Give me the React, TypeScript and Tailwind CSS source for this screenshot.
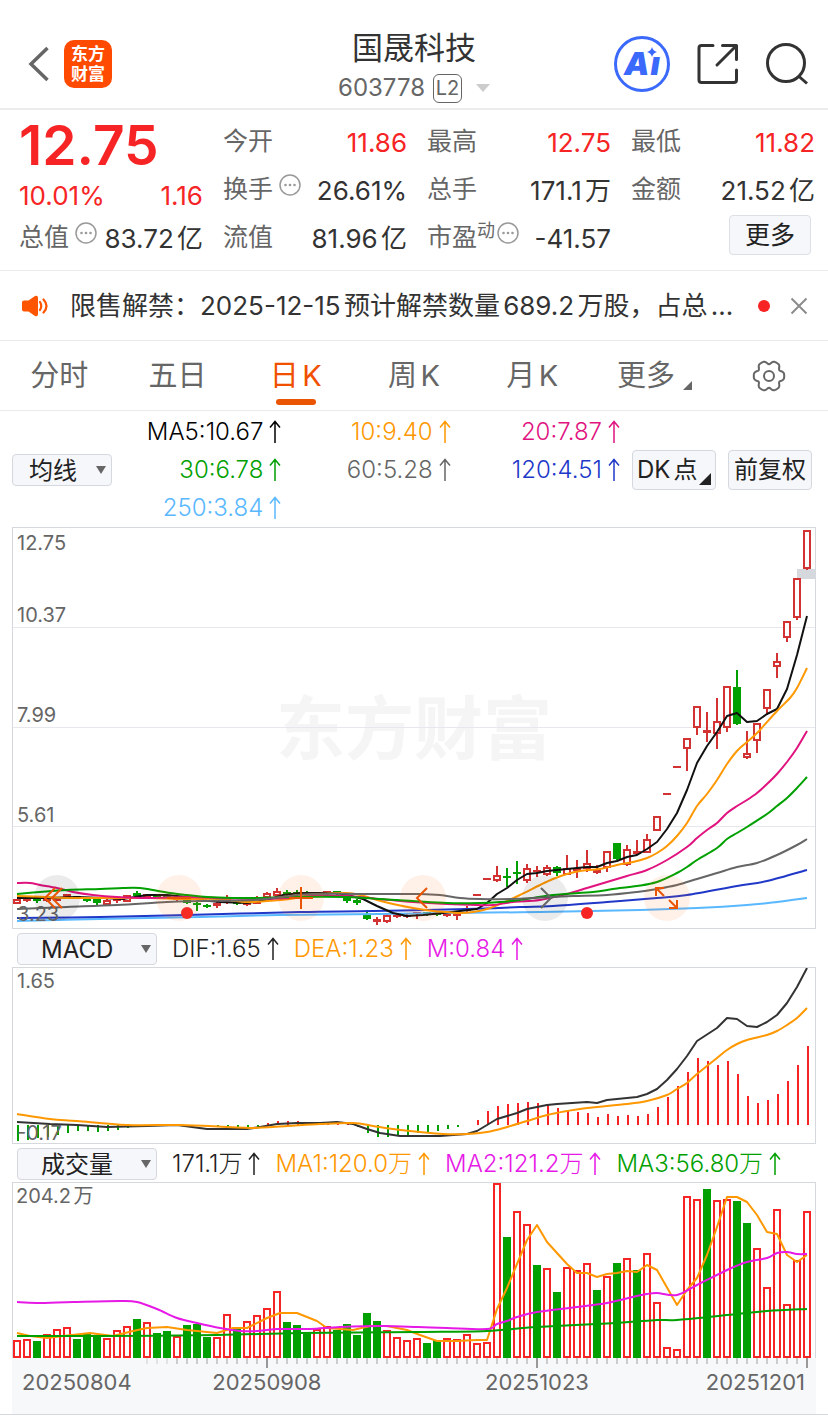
import { useState, type ReactNode } from "react";
import clsx from "clsx";

type Point = [number, number];

// one slot per trading day
const slotX = (i: number) => 17 + i * 10;

// [body top, body bottom, high, low, is down]
const CANDLES: [number, number, number, number, number?][] = [
  [899, 903, 899, 903], [899, 901, 899, 901], [899, 900, 898, 902, 1], [899, 900, 898, 901], [899, 900, 899, 900],
  [894, 897, 894, 897], [896, 897, 896, 898, 1], [899, 900, 898, 901, 1], [899, 903, 898, 904, 1], [900, 904, 899, 904],
  [899, 901, 899, 902], [895, 901, 895, 901], [893, 896, 891, 897, 1], [894, 897, 894, 898], [895, 897, 895, 898, 1],
  [896, 898, 896, 898, 1], [898, 899, 897, 900], [899, 903, 898, 903, 1], [903, 905, 901, 910, 1], [905, 906, 904, 907, 1],
  [903, 906, 902, 907], [899, 902, 895, 903], [902, 904, 901, 904, 1], [902, 905, 902, 905], [897, 903, 896, 903],
  [893, 897, 892, 898], [891, 895, 888, 896], [892, 894, 890, 896, 1], [892, 894, 890, 895, 1], [893, 895, 891, 896, 1],
  [893, 894, 892, 895], [891, 893, 891, 894], [891, 893, 891, 894, 1], [898, 901, 896, 902, 1], [900, 903, 899, 904, 1],
  [915, 919, 910, 919, 1], [919, 922, 917, 924], [915, 921, 914, 922], [915, 917, 914, 917], [915, 916, 914, 917],
  [912, 914, 912, 918], [912, 914, 912, 915, 1], [913, 915, 913, 915, 1], [914, 916, 914, 916], [914, 916, 914, 919],
  [908, 911, 906, 911], [894, 895, 894, 895], [878, 879, 878, 879], [875, 880, 866, 881], [876, 878, 868, 886, 1],
  [872, 874, 861, 883, 1], [868, 880, 864, 882], [870, 872, 866, 876], [867, 874, 865, 875], [867, 873, 866, 875, 1],
  [868, 874, 855, 874], [868, 871, 860, 877], [863, 868, 850, 871], [870, 873, 865, 873], [851, 867, 851, 871],
  [843, 859, 843, 859, 1], [849, 864, 845, 865], [851, 854, 840, 854], [839, 852, 834, 852], [816, 830, 816, 830],
  [793, 794, 793, 794], [766, 767, 766, 767], [738, 748, 738, 770], [706, 727, 706, 734], [730, 733, 712, 741],
  [721, 733, 698, 748], [686, 727, 686, 731], [687, 724, 670, 724, 1], [753, 757, 731, 758], [723, 740, 723, 752],
  [689, 708, 689, 714], [661, 666, 653, 677], [621, 637, 621, 641], [578, 617, 578, 619], [530, 568, 530, 569],
];

// negative = down day
const VOLUMES = [
  18, 19, -17, 24, 29, 31, -19, -25, -23, 20, 28, 32, -39, 36, -25, -27, 22, -33, -34, -21,
  21, 44, -31, 37, 43, 50, 67, -36, -33, -26, 29, 32, -28, -34, -23, -45, -37, 28, 21, 18,
  20, -15, -18, 20, 19, 24, 15, 16, 175, -121, 147, 134, -93, 90, -66, 91, 88, 95, -68, 82,
  -95, 100, -88, 105, 56, 11, 9, 162, 159, -169, 158, 159, -157, -135, 110, 71, 149, 54, 98, 147,
];

const MACD_BARS = [
  -16, -15, -13, -12, -10, -8, -6, -6, -7, -6, -5, -3, -1, 0, 0, 0, 0, 0, 0, -1,
  -2, -2, -2, -2, -2, 2, 4, 4, 4, 3, 2, 2, 1, 2, -2, -8, -12, -12, -11, -11,
  -8, -7, -6, -4, -2, 0, 5, 14, 19, 21, 22, 23, 22, 21, 17, 15, 13, 12, 8, 11,
  9, 10, 9, 11, 18, 28, 39, 53, 67, 64, 60, 64, 51, 29, 22, 25, 31, 44, 60, 79,
];

const MA5: Point[] = [
  [17, 898], [47, 898], [77, 897], [103, 898], [123, 899], [147, 895], [167, 895], [187, 897], [200, 900], [220, 902],
  [247, 903], [267, 900], [283, 895], [300, 893], [320, 893], [337, 893], [347, 895], [363, 899], [377, 906], [393, 913],
  [407, 916], [423, 915], [443, 913], [460, 911], [477, 909], [487, 903], [497, 894], [507, 888], [517, 880], [527, 874],
  [537, 873], [547, 871], [567, 869], [577, 868], [587, 867], [597, 867], [607, 863], [617, 861], [627, 857], [637, 855],
  [647, 849], [657, 842], [667, 829], [677, 813], [687, 790], [697, 763], [707, 746], [717, 732], [727, 716], [737, 713],
  [747, 722], [757, 721], [767, 714], [777, 709], [787, 689], [797, 655], [807, 616],
];
const MA10: Point[] = [
  [17, 896], [47, 897], [67, 898], [117, 898], [150, 898], [183, 899], [217, 899], [247, 902], [267, 901], [290, 899],
  [300, 897], [320, 894], [347, 893], [360, 895], [377, 900], [393, 904], [413, 908], [433, 911], [447, 912], [460, 913],
  [473, 912], [487, 909], [500, 904], [520, 895], [540, 885], [553, 879], [567, 874], [580, 871], [600, 869], [617, 865],
  [633, 862], [647, 858], [657, 853], [667, 846], [677, 836], [687, 823], [697, 806], [707, 794], [717, 780], [727, 764],
  [737, 751], [747, 742], [757, 733], [777, 711], [790, 698], [797, 688], [807, 668],
];
const MA20: Point[] = [
  [17, 883], [30, 883], [40, 885], [57, 888], [73, 892], [93, 895], [117, 897], [147, 898], [187, 897], [217, 898],
  [253, 899], [290, 898], [313, 896], [347, 896], [380, 899], [413, 902], [447, 904], [477, 905], [493, 905], [513, 902],
  [540, 900], [567, 894], [587, 888], [607, 882], [627, 876], [647, 870], [667, 860], [687, 847], [697, 838], [707, 830],
  [717, 823], [727, 813], [737, 806], [747, 800], [757, 793], [767, 784], [777, 774], [787, 762], [797, 748], [807, 731],
];
const MA30: Point[] = [
  [17, 894], [40, 892], [67, 890], [100, 889], [123, 888], [140, 888], [153, 890], [170, 893], [187, 895], [207, 897],
  [233, 898], [253, 898], [290, 897], [347, 897], [380, 899], [413, 901], [447, 903], [480, 903], [500, 902], [520, 900],
  [553, 895], [593, 892], [613, 889], [637, 886], [657, 882], [677, 873], [687, 867], [697, 860], [717, 848], [727, 839],
  [737, 833], [747, 827], [767, 814], [777, 806], [787, 798], [797, 788], [807, 777],
];
const MA60: Point[] = [
  [17, 909], [67, 907], [117, 905], [167, 902], [200, 901], [253, 900], [290, 896], [313, 894], [380, 894], [420, 894],
  [440, 895], [460, 898], [480, 899], [513, 899], [553, 897], [573, 896], [607, 895], [637, 892], [657, 889], [677, 885],
  [697, 879], [717, 873], [737, 867], [757, 863], [777, 855], [797, 845], [807, 839],
];
const MA120: Point[] = [
  [17, 918], [100, 917], [187, 915], [300, 912], [373, 911], [467, 909], [520, 907], [553, 906], [607, 902], [657, 898],
  [687, 895], [737, 886], [767, 881], [807, 870],
];
const MA250: Point[] = [
  [17, 921], [100, 919], [200, 917], [280, 915], [380, 914], [447, 913], [540, 912], [640, 910], [697, 908], [747, 905],
  [777, 902], [807, 898],
];

const DIF: Point[] = [
  [17, 1122], [50, 1124], [77, 1125], [107, 1127], [147, 1126], [177, 1125], [207, 1129], [247, 1129], [260, 1127],
  [277, 1124], [297, 1123], [320, 1123], [337, 1122], [353, 1124], [367, 1129], [380, 1133], [400, 1136], [440, 1136],
  [467, 1134], [477, 1131], [487, 1125], [497, 1119], [517, 1113], [527, 1109], [547, 1105], [557, 1104], [587, 1102],
  [597, 1103], [607, 1100], [627, 1098], [637, 1097], [647, 1094], [657, 1089], [667, 1080], [677, 1069], [687, 1056],
  [697, 1041], [717, 1028], [727, 1018], [737, 1019], [747, 1026], [757, 1027], [767, 1022], [777, 1015], [787, 1003],
  [797, 987], [807, 968],
];
const DEA: Point[] = [
  [17, 1114], [50, 1119], [77, 1121], [127, 1125], [180, 1125], [227, 1127], [253, 1128], [287, 1126], [320, 1124],
  [353, 1123], [373, 1126], [393, 1129], [420, 1132], [443, 1134], [467, 1134], [487, 1132], [507, 1127], [527, 1121],
  [547, 1115], [567, 1111], [587, 1108], [627, 1104], [647, 1101], [667, 1095], [677, 1089], [687, 1083], [697, 1074],
  [717, 1058], [727, 1050], [737, 1044], [747, 1040], [767, 1035], [777, 1031], [787, 1025], [797, 1018], [807, 1008],
];

const VOL_MA1: Point[] = [
  [17, 1333], [30, 1336], [47, 1338], [63, 1336], [90, 1333], [113, 1336], [133, 1331], [147, 1328], [167, 1327],
  [187, 1330], [217, 1333], [233, 1328], [247, 1328], [267, 1318], [280, 1313], [297, 1313], [317, 1321], [327, 1328],
  [353, 1330], [370, 1326], [387, 1326], [407, 1330], [420, 1335], [437, 1341], [457, 1341], [477, 1340], [487, 1340],
  [497, 1309], [507, 1288], [527, 1240], [537, 1225], [547, 1242], [567, 1264], [577, 1273], [587, 1273], [597, 1277],
  [607, 1274], [617, 1273], [627, 1271], [637, 1272], [647, 1265], [657, 1270], [677, 1305], [687, 1290], [697, 1278],
  [707, 1255], [717, 1227], [727, 1197], [737, 1197], [747, 1202], [757, 1215], [767, 1232], [777, 1234], [787, 1255],
  [797, 1262], [807, 1255],
];
const VOL_MA2: Point[] = [
  [17, 1302], [37, 1303], [73, 1302], [120, 1301], [137, 1302], [157, 1309], [177, 1318], [197, 1323], [220, 1328],
  [240, 1331], [257, 1331], [277, 1329], [310, 1329], [340, 1327], [383, 1326], [418, 1327], [447, 1328], [487, 1329],
  [497, 1324], [507, 1321], [517, 1317], [537, 1312], [577, 1307], [607, 1303], [637, 1296], [647, 1294], [657, 1293],
  [677, 1295], [697, 1285], [727, 1270], [747, 1262], [767, 1258], [777, 1253], [787, 1252], [797, 1254], [807, 1254],
];
const VOL_MA3: Point[] = [
  [17, 1336], [100, 1336], [217, 1335], [300, 1333], [418, 1332], [487, 1331], [537, 1327], [617, 1323], [657, 1320],
  [677, 1320], [727, 1315], [767, 1311], [807, 1309],
];

const straight = (pts: Point[]) => pts.map(([x, y], i) => `${i ? "L" : "M"}${x} ${y}`).join("");

// Catmull-Rom through the points, written as cubic segments
function smooth(pts: Point[]) {
  let d = `M${pts[0][0]} ${pts[0][1]}`;
  for (let i = 0; i < pts.length - 1; i++) {
    const p0 = pts[i - 1] ?? pts[i];
    const p1 = pts[i];
    const p2 = pts[i + 1];
    const p3 = pts[i + 2] ?? p2;
    d += `C${p1[0] + (p2[0] - p0[0]) / 6} ${p1[1] + (p2[1] - p0[1]) / 6} ${p2[0] - (p3[0] - p1[0]) / 6} ${p2[1] - (p3[1] - p1[1]) / 6} ${p2[0]} ${p2[1]}`;
  }
  return d;
}

// six blunt teeth
const GEAR = Array.from({ length: 121 }, (_, i) => {
  const a = (i * 3 * Math.PI) / 180;
  const r = 14 + 1.7 * Math.cos(6 * a) - 0.5 * Math.cos(12 * a);
  return `${i ? "L" : "M"}${(17 + r * Math.cos(a)).toFixed(2)} ${(17 + r * Math.sin(a)).toFixed(2)}`;
}).join("");

function Line({ d, color }: { d: string; color: string }) {
  return <path d={d} fill="none" stroke={color} strokeWidth="2" strokeLinejoin="round" />;
}

function UpArrow() {
  return (
    <svg width="12" height="24" viewBox="0 0 12 24" fill="none" stroke="currentColor" strokeWidth="1.5" role="img" aria-label="上升">
      <path d="M6 23V1.5M1 7.5L6 1.5L11 7.5" />
    </svg>
  );
}

function Legend({ text, className }: { text: string; className: string }) {
  return (
    <span className={clsx("flex items-center gap-1.5 whitespace-nowrap text-2xl font-light leading-8 [text-autospace:no-autospace]", className)}>
      {text}
      <UpArrow />
    </span>
  );
}

function Info({ label }: { label: string }) {
  return (
    <button type="button" aria-label={label} className="mb-2.5 shrink-0">
      <svg width="22" height="22" viewBox="0 0 22 22" fill="#999">
        <circle cx="11" cy="11" r="10" fill="none" stroke="#999" strokeWidth="1.5" />
        <circle cx="6.5" cy="11" r="1.3" />
        <circle cx="11" cy="11" r="1.3" />
        <circle cx="15.5" cy="11" r="1.3" />
      </svg>
    </button>
  );
}

function Stat({ label, value, red, children }: { label: string; value: string; red?: boolean; children?: ReactNode }) {
  return (
    <div className="flex h-12 items-center whitespace-nowrap text-[25px]">
      <span className="text-[#666]">{label}</span>
      {children}
      <span className={clsx("ml-auto text-[26px]", red ? "text-[#f62424]" : "text-[#333]")}>{value}</span>
    </div>
  );
}

function Picker({ label, options, className, selectClass }: { label: string; options: string[]; className: string; selectClass: string }) {
  return (
    <div className={clsx("relative shrink-0", className)}>
      <select
        aria-label={label}
        className={clsx("block h-8 w-full appearance-none rounded border border-[#d5d8df] bg-[#f6f7fa] pt-0.5 text-2xl leading-7 text-[#222]", selectClass)}
      >
        {options.map((o) => (
          <option key={o}>{o}</option>
        ))}
      </select>
      <svg className="pointer-events-none absolute right-1.5 top-3" width="10" height="8" viewBox="0 0 10 8" fill="#666">
        <path d="M0 0H10L5 8Z" />
      </svg>
    </div>
  );
}

function Header() {
  return (
    <header className="grid grid-cols-[1fr_auto_1fr] items-center border-b-2 border-[#ececec] pt-5">
      <div className="flex items-center gap-3.5 pl-7">
        <button type="button" aria-label="返回">
          <svg width="22" height="36" viewBox="0 0 22 36" fill="none" stroke="#666" strokeWidth="3.5">
            <path d="M19.5 2L3 18L19.5 34" />
          </svg>
        </button>
        <a href="#" className="grid size-12 place-content-center rounded-[10px] bg-[#ff4a00] text-center text-[17px] font-bold leading-5 text-white">
          <span>东方</span>
          <span>财富</span>
        </a>
      </div>
      <div className="flex flex-col items-center pt-2">
        <h1 className="text-[31px] leading-10 text-[#333]">国晟科技</h1>
        <div className="flex h-10 items-center gap-2 text-2xl text-[#666]">
          603778
          <span className="grid h-[29px] w-[29px] place-content-center rounded-md border border-[#666] text-xl leading-6">L2</span>
          <svg className="ml-1.5" width="14" height="8" viewBox="0 0 14 8" fill="#ccc">
            <path d="M0 0H14L7 8Z" />
          </svg>
        </div>
      </div>
      <div className="flex items-center justify-end gap-[27px] pr-5">
        <button type="button" aria-label="AI" className="relative flex size-14 items-center justify-center gap-px rounded-full border-[3px] border-[#3a69fb] text-[32px] font-black italic leading-none text-[#3a69fb]">
          <span>A</span>
          <span>ı</span>
          <svg className="absolute right-2.5 top-2" width="10" height="10" viewBox="0 0 10 10" fill="#3a69fb">
            <path d="M5 0Q6 4 10 5Q6 6 5 10Q4 6 0 5Q4 4 5 0Z" />
          </svg>
        </button>
        <button type="button" aria-label="分享">
          <svg width="42" height="42" viewBox="0 0 42 42" fill="none" stroke="#333" strokeWidth="3" strokeLinecap="round" strokeLinejoin="round">
            <path d="M16 2.500H4.500Q2 2.500 2 5V37Q2 39.500 4.500 39.500H37Q39.500 39.500 39.500 37V27M25.500 2.500H39.500V16.500M39 3L20 22" />
          </svg>
        </button>
        <button type="button" aria-label="搜索">
          <svg width="42" height="42" viewBox="0 0 42 42" fill="none" stroke="#333" strokeWidth="3">
            <circle cx="20" cy="20" r="18.500" />
            <path d="M32.500 33L41 40.500" />
          </svg>
        </button>
      </div>
    </header>
  );
}

function Quote() {
  return (
    <section className="grid grid-cols-4 gap-x-5 border-b border-[#eaeaea] pb-2 pl-[19px] pr-[13px] pt-2">
      <div>
        <p className="h-14 text-[55px] font-semibold leading-[54px] text-[#f62424]">12.75</p>
        <p className="flex h-10 items-end justify-between text-[26px] leading-9 text-[#f62424]">
          <span>10.01%</span>
          <span>1.16</span>
        </p>
        <Stat label="总值" value="83.72亿">
          <span className="w-1.5" />
          <Info label="总值说明" />
        </Stat>
      </div>
      <div>
        <Stat label="今开" value="11.86" red />
        <Stat label="换手" value="26.61%">
          <span className="w-1.5" />
          <Info label="换手说明" />
        </Stat>
        <Stat label="流值" value="81.96亿" />
      </div>
      <div>
        <Stat label="最高" value="12.75" red />
        <Stat label="总手" value="171.1万" />
        <Stat label="市盈" value="-41.57">
          <span className="mb-3.5 text-lg text-[#666]">动</span>
          <span className="w-0.5" />
          <Info label="市盈说明" />
        </Stat>
      </div>
      <div>
        <Stat label="最低" value="11.82" red />
        <Stat label="金额" value="21.52亿" />
        <div className="flex justify-end pr-1 pt-px">
          <button type="button" className="h-10 w-[82px] rounded border border-[#dddfe6] bg-[#f6f7fa] text-[25px] leading-9 text-[#222]">
            更多
          </button>
        </div>
      </div>
    </section>
  );
}

function Notice({ onClose }: { onClose: () => void }) {
  return (
    <section className="flex h-[70px] items-center border-b border-[#eaeaea] pl-[22px] pr-5">
      <svg className="shrink-0" width="27" height="22" viewBox="0 0 27 22">
        <path d="M2 5.500H6.500L13 1Q16 0 16 3V19Q16 22 13 21L6.500 16.500H2Q0 16.500 0 14.500V7.500Q0 5.500 2 5.500Z" fill="#ff5500" />
        <path d="M18 7Q20.500 11 18 15M21.500 4.500Q27.500 11 21.500 17.500" fill="none" stroke="#ff5500" strokeWidth="2.200" strokeLinecap="round" />
      </svg>
      <a href="#" className="ml-[21px] flex-1 truncate text-[26px] text-[#333]">
        限售解禁：2025-12-15预计解禁数量689.2万股，占总...
      </a>
      <span className="size-3 shrink-0 rounded-full bg-[#f62424]" />
      <button type="button" aria-label="关闭" className="ml-5 shrink-0" onClick={onClose}>
        <svg width="18" height="18" viewBox="0 0 18 18" fill="none" stroke="#8c8c8c" strokeWidth="2">
          <path d="M1.500 1.500L16.500 16.500M16.500 1.500L1.500 16.500" />
        </svg>
      </button>
    </section>
  );
}

const TABS = ["分时", "五日", "日K", "周K", "月K"];

function Tabs() {
  const [active, setActive] = useState("日K");
  return (
    <nav className="grid h-[70px] grid-cols-7 border-b border-[#eaeaea] text-[29px] text-[#666]">
      {TABS.map((t) => (
        <button
          key={t}
          type="button"
          onClick={() => setActive(t)}
          className={clsx("relative", active === t && "text-[#f05000]")}
        >
          {t}
          {active === t && <span className="absolute bottom-[5px] left-1/2 h-1.5 w-10 -translate-x-1/2 rounded-full bg-[#ea5504]" />}
        </button>
      ))}
      <button type="button" className="flex items-center justify-center gap-2 pl-2">
        更多
        <svg className="mt-5" width="9" height="9" viewBox="0 0 9 9" fill="#666">
          <path d="M9 0V9H0Z" />
        </svg>
      </button>
      <button type="button" aria-label="设置" className="flex items-center justify-center">
        <svg width="34" height="34" viewBox="0 0 34 34" fill="none" stroke="#666" strokeWidth="2">
          <path d={GEAR} />
          <circle cx="17" cy="17" r="5" />
        </svg>
      </button>
    </nav>
  );
}

function AverageBar() {
  return (
    <section className="flex items-center pl-3 pr-4 pt-0.5">
      <Picker label="均线" options={["均线", "BOLL"]} className="w-[100px]" selectClass="pl-4" />
      <div className="grid flex-1 auto-rows-[38px] grid-cols-3 items-center justify-items-end pr-0.5">
        <Legend text="MA5:10.67" className="text-black" />
        <Legend text="10:9.40" className="text-[#ff9800]" />
        <Legend text="20:7.87" className="text-[#e0137f]" />
        <Legend text="30:6.78" className="text-[#00a000]" />
        <Legend text="60:5.28" className="text-[#666]" />
        <Legend text="120:4.51" className="text-[#2038c8]" />
        <Legend text="250:3.84" className="text-[#5ab8ff]" />
      </div>
      <button type="button" className="relative ml-2.5 h-10 w-[84px] rounded border border-[#d5d8df] bg-[#f6f7fa] pl-1 text-left text-2xl text-[#222]">
        DK点
        <svg className="absolute bottom-1 right-1" width="12" height="12" viewBox="0 0 12 12" fill="#222">
          <path d="M12 0V12H0Z" />
        </svg>
      </button>
      <button type="button" className="ml-3 h-10 w-[84px] rounded border border-[#d5d8df] bg-[#f6f7fa] text-2xl text-[#222]">
        前复权
      </button>
    </section>
  );
}

const CHART_BUTTONS = [
  { label: "最早", d: "M21 13L11 23L21 33M28 13L18 23L28 33" },
  { label: "缩小", d: "M11 23H35" },
  { label: "放大", d: "M11 23H35M23 12V34" },
  { label: "左移", d: "M27 13L17 23L27 33" },
  { label: "右移", d: "M19 13L29 23L19 33", muted: true },
  { label: "全屏", d: "M12 21V13H20M13 14L20 21M33 25V33H25M32 32L25 25" },
];

function PriceChart() {
  return (
    <section className="relative mx-3 h-[402px] border border-[#d5d8dc]">
      <p className="absolute inset-x-0 top-[151px] text-center text-[69px] font-bold leading-[100px] text-[#f5f5f5]">东方财富</p>
      <svg className="relative block h-full w-full" viewBox="13 528 802 400" preserveAspectRatio="none" role="img" aria-label="日K线">
        {[628, 728, 827].map((y) => (
          <rect key={y} x="13" y={y - 1} width="802" height="1" fill="#e6e8ee" />
        ))}
        <rect x="797" y="569" width="18" height="10" fill="#d5d8dd" />
        {CANDLES.map(([top, bottom, high, low, down], i) => {
          const x = slotX(i);
          const color = down ? "#00a000" : "#d23232";
          return (
            <g key={i}>
              <rect x={x - 1} y={high} width="2" height={low - high + 1} fill={color} />
              {down || bottom - top < 4 ? (
                <rect x={x - 4} y={top} width="8" height={Math.max(bottom - top, 2)} fill={color} />
              ) : (
                <rect x={x - 3} y={top + 1} width="6" height={bottom - top - 1} fill="#fff" stroke={color} strokeWidth="2" />
              )}
            </g>
          );
        })}
        <Line d={smooth(MA250)} color="#5ab8ff" />
        <Line d={smooth(MA120)} color="#2038c8" />
        <Line d={straight(MA5)} color="#111" />
        <Line d={smooth(MA10)} color="#ff9800" />
        <Line d={smooth(MA20)} color="#e0137f" />
        <Line d={smooth(MA30)} color="#00a000" />
        <Line d={smooth(MA60)} color="#666" />
        <circle cx="187" cy="913" r="6" fill="#f62424" />
        <circle cx="587" cy="913" r="6" fill="#f62424" />
      </svg>
      <div className="pointer-events-none absolute inset-y-0 left-1 text-xl leading-6 text-[#666]">
        <span className="absolute top-[3px]">12.75</span>
        <span className="absolute top-[75px]">10.37</span>
        <span className="absolute top-[175px]">7.99</span>
        <span className="absolute top-[275px]">5.61</span>
        <span className="absolute bottom-0.5">3.23</span>
      </div>
      <div className="absolute bottom-[7px] left-[21px] flex gap-[76px]">
        {CHART_BUTTONS.map((b, i) => (
          <button
            key={b.label}
            type="button"
            aria-label={b.label}
            className={clsx("size-[46px] rounded-full", i === 0 || b.muted ? "bg-black/8" : "bg-[#ff6a1f]/10")}
          >
            <svg width="46" height="46" viewBox="0 0 46 46" fill="none" stroke={b.muted ? "#666" : "#ea5504"} strokeWidth="2">
              <path d={b.d} />
            </svg>
          </button>
        ))}
      </div>
    </section>
  );
}

function MacdChart() {
  return (
    <section>
      <div className="flex h-[38px] items-center gap-[15px] pl-[17px] pt-0.5">
        <Picker label="副图指标一" options={["MACD", "KDJ", "RSI"]} className="w-[140px]" selectClass="pl-[23px]" />
        <Legend text="DIF:1.65" className="text-[#222]" />
        <Legend text="DEA:1.23" className="text-[#ff9800]" />
        <Legend text="M:0.84" className="text-[#e619e6]" />
      </div>
      <div className="relative mx-3 h-[177px] border border-[#d5d8dc]">
        <svg className="block h-full w-full" viewBox="13 968 802 175" preserveAspectRatio="none" role="img" aria-label="MACD">
          {MACD_BARS.map((v, i) => (
            <rect key={i} x={slotX(i)} y={v > 0 ? 1125 - v : 1125} width="2" height={Math.abs(v)} fill={v > 0 ? "#f62424" : "#00a000"} />
          ))}
          <Line d={straight(DIF)} color="#333" />
          <Line d={smooth(DEA)} color="#ff9800" />
        </svg>
        <div className="pointer-events-none absolute inset-y-0 left-1 text-xl leading-6 text-[#666]">
          <span className="absolute top-px">1.65</span>
          <span className="absolute -bottom-0.5">-0.17</span>
        </div>
      </div>
    </section>
  );
}

function VolumeChart() {
  return (
    <section>
      <div className="flex h-[38px] items-center gap-[15px] pl-[17px] pt-0.5">
        <Picker label="副图指标二" options={["成交量", "成交额"]} className="w-[140px]" selectClass="pl-[23px]" />
        <Legend text="171.1万" className="text-[#222]" />
        <Legend text="MA1:120.0万" className="text-[#ff9800]" />
        <Legend text="MA2:121.2万" className="text-[#e619e6]" />
        <Legend text="MA3:56.80万" className="text-[#00a000]" />
      </div>
      <div className="relative mx-3 h-[176px] border-x border-t border-[#d5d8dc]">
        <svg className="block h-full w-full" viewBox="13 1183 802 175" preserveAspectRatio="none" role="img" aria-label="成交量">
          {VOLUMES.map((v, i) =>
            v < 0 ? (
              <rect key={i} x={slotX(i) - 4} y={1358 + v} width="8" height={-v} fill="#00a000" />
            ) : (
              <rect key={i} x={slotX(i) - 3} y={1359 - v} width="6" height={v - 2} fill="#fff" stroke="#f62424" strokeWidth="2" />
            )
          )}
          <Line d={straight(VOL_MA1)} color="#ff9800" />
          <Line d={smooth(VOL_MA2)} color="#e619e6" />
          <Line d={smooth(VOL_MA3)} color="#00a000" />
        </svg>
        <span className="absolute left-[3px] top-px text-xl leading-6 text-[#666]">204.2万</span>
      </div>
      <div className="border-b border-[#d5d8dc] px-3">
        <div className="relative h-14 bg-[#f7f8fa] text-[22px] leading-6 text-[#666]">
          <svg className="block h-2.5 w-full" viewBox="12 0 804 10" preserveAspectRatio="none" aria-hidden="true">
            {VOLUMES.map((_, i) => {
              const major = i === 25 || i === 52 || i === 79;
              return i < 13 ? null : (
                <rect key={i} x={slotX(i) - 1} y="0" width="2" height={major ? 10 : 6} fill={major ? "#999" : "#ccc"} opacity={i < 16 ? 0.5 : 1} />
              );
            })}
          </svg>
          <span className="absolute left-2.5 top-3">20250804</span>
          <span className="absolute left-[31.7%] top-3 -translate-x-1/2">20250908</span>
          <span className="absolute left-[65.3%] top-3 -translate-x-1/2">20251023</span>
          <span className="absolute right-[11px] top-3">20251201</span>
        </div>
      </div>
    </section>
  );
}

export default function App() {
  const [noticeOpen, setNoticeOpen] = useState(true);
  return (
    <main className="bg-white pb-1 font-['Inter','Noto_Sans_CJK_SC',sans-serif] [text-autospace:normal]" lang="zh-CN">
      <Header />
      <Quote />
      {noticeOpen && <Notice onClose={() => setNoticeOpen(false)} />}
      <Tabs />
      <AverageBar />
      <PriceChart />
      <MacdChart />
      <VolumeChart />
    </main>
  );
}
